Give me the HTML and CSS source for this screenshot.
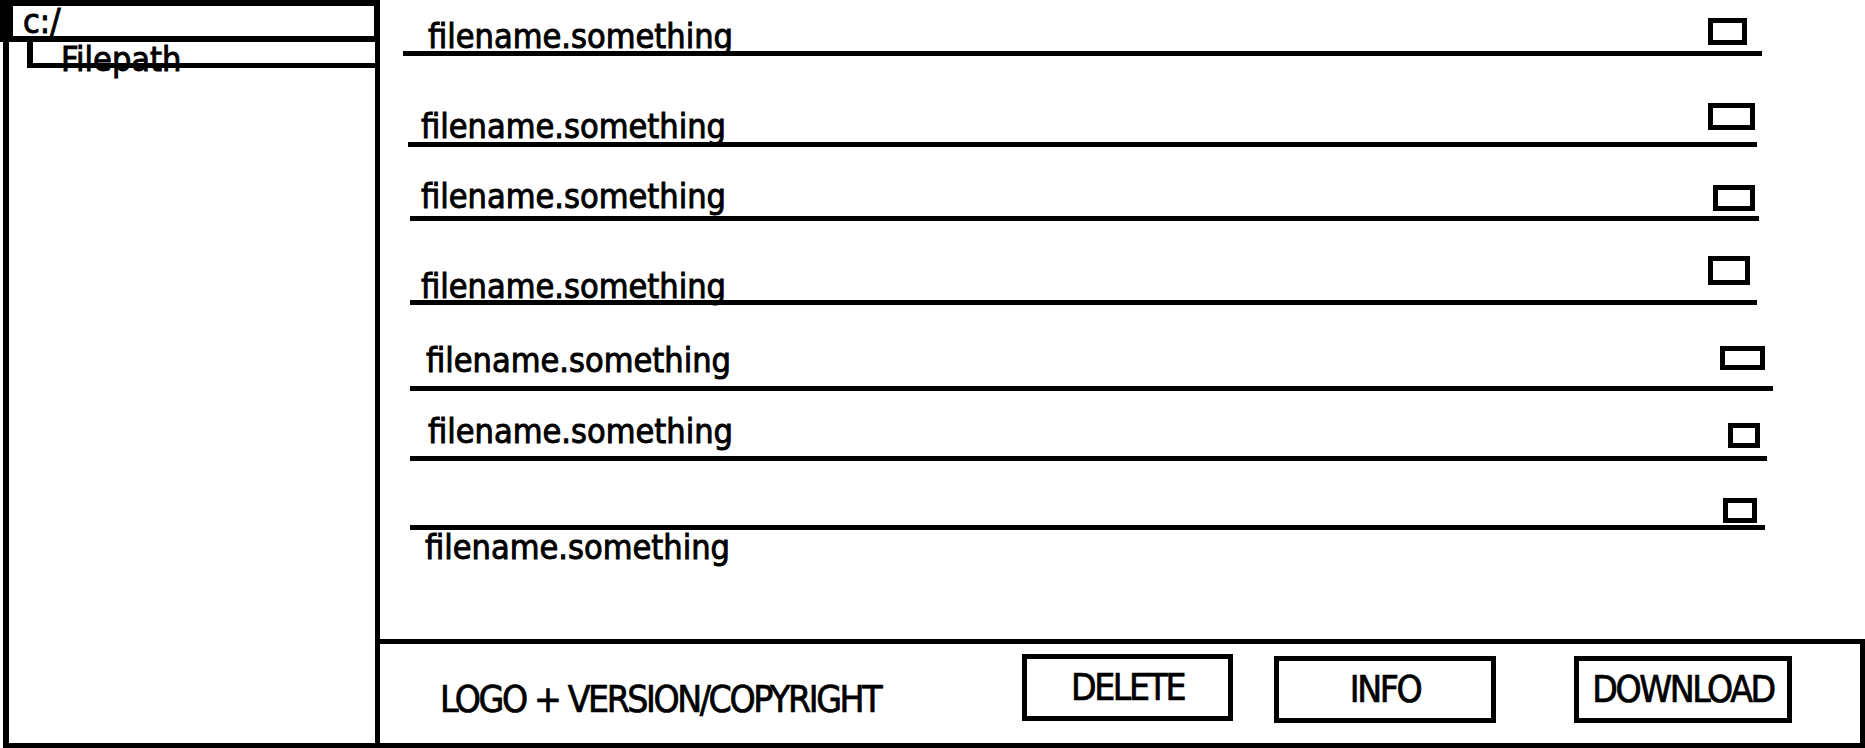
FILE: index.html
```html
<!DOCTYPE html>
<html lang="en">
<head>
<meta charset="utf-8">
<title>File browser wireframe</title>
<link rel="stylesheet" href="styles.css">
</head>
<body>
<div class="app">
  <aside class="sidebar">
    <div class="drive">c:/</div>
    <div class="tree">
      <div class="path"><span class="path-label">Filepath</span></div>
    </div>
  </aside>
  <main class="main">
    <ul class="files">
      <li class="file"><span class="name">filename.something</span><span class="check"></span></li>
      <li class="file"><span class="name">filename.something</span><span class="check"></span></li>
      <li class="file"><span class="name">filename.something</span><span class="check"></span></li>
      <li class="file"><span class="name">filename.something</span><span class="check"></span></li>
      <li class="file"><span class="name">filename.something</span><span class="check"></span></li>
      <li class="file"><span class="name">filename.something</span><span class="check"></span></li>
      <li class="file file-flip"><span class="check"></span><span class="name">filename.something</span></li>
    </ul>
    <footer class="footer">
      <span class="brand">LOGO + VERSION/COPYRIGHT</span>
      <button class="btn btn-delete">DELETE</button>
      <button class="btn btn-info">INFO</button>
      <button class="btn btn-download">DOWNLOAD</button>
    </footer>
  </main>
</div>
</body>
</html>
```
FILE: styles.css
```css
* {
  box-sizing: border-box;
  margin: 0;
  padding: 0;
}

body {
  margin: 0;
  background: #fff;
  color: #000;
  font-family: "DejaVu Sans Condensed", "DejaVu Sans", sans-serif;
  -webkit-text-stroke: 0.9px #000;
}

.app {
  display: flex;
  width: 1865px;
  height: 748px;
  overflow: hidden;
}

/* ---------- sidebar ---------- */
.sidebar {
  flex: none;
  width: 380px;
  display: flex;
  flex-direction: column;
}

.drive {
  height: 42px;
  border: 6px solid #000;
  border-left-width: 13px;
  padding-left: 10px;
  font-size: 34px;
  line-height: 30px;
}

.tree {
  flex: 1;
  margin-left: 3px;
  border: 0 solid #000;
  border-left-width: 6px;
  border-right-width: 5px;
  border-bottom-width: 5px;
  padding-left: 18px;
}

.path {
  height: 26px;
  border-left: 6px solid #000;
  border-bottom: 5px solid #000;
  padding-left: 28px;
  font-size: 34px;
  line-height: 35px;
  white-space: nowrap;
}

/* ---------- file list ---------- */
.main {
  flex: 1;
  min-width: 0;
  display: flex;
  flex-direction: column;
}

.files {
  flex: 1;
  list-style: none;
}

.file {
  display: flex;
  align-items: flex-end;
  height: var(--h);
  margin-left: var(--ls);
  margin-right: var(--le);
  padding-left: var(--tx);
  border-bottom: 5px solid #000;
}

.name {
  font-size: 34px;
  line-height: 34px;
  white-space: nowrap;
  margin-bottom: var(--tb);
}

.check {
  flex: none;
  margin-left: auto;
  width: var(--cw);
  height: var(--ch);
  margin-right: var(--cr);
  margin-bottom: var(--cb);
  border: 5px solid #000;
}

.file:nth-child(1) { --h: 56px; --ls: 23px; --le: 103px; --tx: 25px; --tb: -2px; --cw: 39px; --ch: 27px; --cr: 15px; --cb: 6px; }
.file:nth-child(2) { --h: 91px; --ls: 28px; --le: 108px; --tx: 13px; --tb: -1px; --cw: 47px; --ch: 27px; --cr: 2px; --cb: 12px; }
.file:nth-child(3) { --h: 74px; --ls: 30px; --le: 106px; --tx: 11px; --tb: 3px; --cw: 42px; --ch: 26px; --cr: 4px; --cb: 5px; }
.file:nth-child(4) { --h: 84px; --ls: 30px; --le: 108px; --tx: 11px; --tb: -3px; --cw: 42px; --ch: 29px; --cr: 7px; --cb: 15px; }
.file:nth-child(5) { --h: 86px; --ls: 30px; --le: 92px; --tx: 16px; --tb: 9px; --cw: 45px; --ch: 24px; --cr: 8px; --cb: 16px; }
.file:nth-child(6) { --h: 70px; --ls: 30px; --le: 98px; --tx: 18px; --tb: 8px; --cw: 32px; --ch: 25px; --cr: 7px; --cb: 8px; }

/* last row: the line is drawn above the name */
.file-flip {
  --ls: 30px; --le: 100px; --cw: 34px; --ch: 25px; --cr: 8px;
  height: auto;
  flex-direction: column;
  align-items: stretch;
  padding-left: 0;
  border-bottom: none;
}

.file-flip .check {
  align-self: flex-end;
  margin-top: 37px;
  margin-bottom: 2px;
}

.file-flip .name {
  border-top: 5px solid #000;
  padding-left: 15px;
  margin-bottom: 0;
}

/* ---------- footer ---------- */
.footer {
  flex: none;
  height: 109px;
  display: flex;
  align-items: flex-start;
  padding-left: 60px;
  border: 5px solid #000;
  border-left: none;
}

.brand {
  font-size: 37px;
  line-height: 40px;
  letter-spacing: -2.4px;
  margin-top: 36px;
  white-space: nowrap;
  -webkit-text-stroke: 0.7px #000;
}

.btn {
  flex: none;
  appearance: none;
  font-family: inherit;
  font-size: 37px;
  letter-spacing: -2.4px;
  line-height: 57px;
  height: 67px;
  padding: 0;
  text-align: center;
  color: #000;
  background: #fff;
  border: 5px solid #000;
  border-radius: 0;
  -webkit-text-stroke: 0.7px #000;
}

.btn-delete {
  width: 211px;
  margin-left: auto;
  margin-top: 10px;
  margin-right: 41px;
}

.btn-info {
  width: 222px;
  margin-top: 12px;
  margin-right: 78px;
}

.btn-download {
  width: 218px;
  margin-top: 12px;
  margin-right: 68px;
}
```
